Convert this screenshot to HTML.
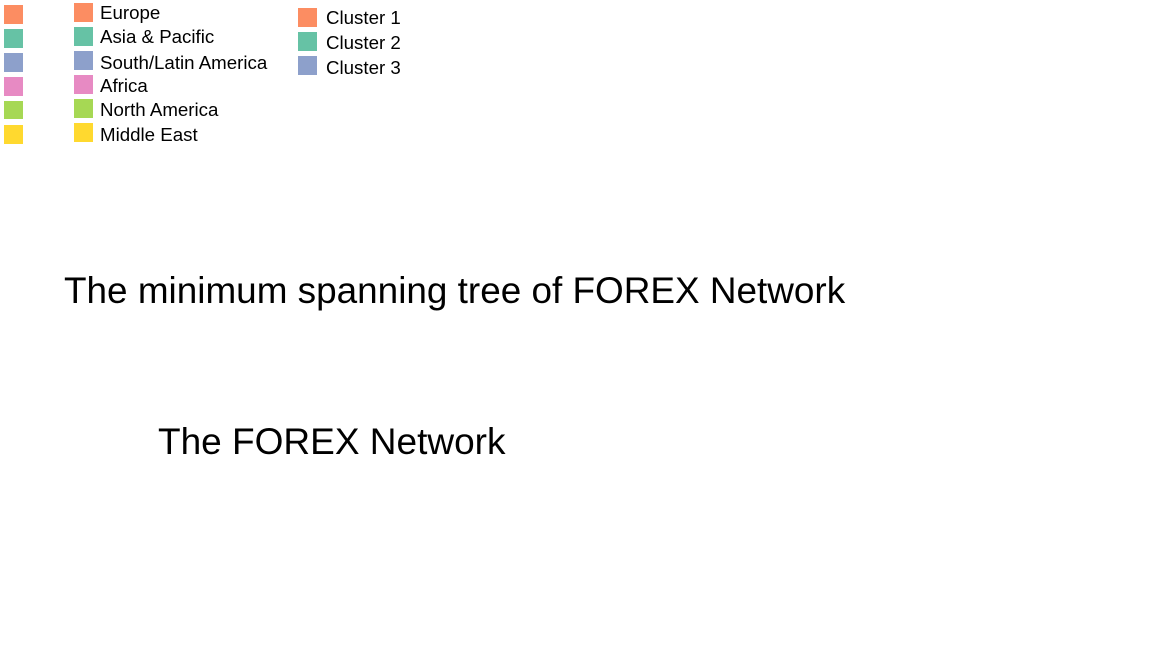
<!DOCTYPE html>
<html><head><meta charset="utf-8"><style>
html,body{margin:0;padding:0;background:#fff;width:1152px;height:648px;overflow:hidden}
svg{display:block}
text{font-family:"Liberation Sans",sans-serif;fill:#000}
</style></head><body>
<svg width="1152" height="648" xmlns="http://www.w3.org/2000/svg">
<g>
<rect x="4" y="5" width="19" height="19" fill="#fc8d62"/>
<rect x="4" y="29" width="19" height="19" fill="#66c2a5"/>
<rect x="4" y="53" width="19" height="19" fill="#8da0cb"/>
<rect x="4" y="77" width="19" height="19" fill="#e78ac3"/>
<rect x="4" y="101" width="19" height="18" fill="#a6d854"/>
<rect x="4" y="125" width="19" height="19" fill="#ffd92f"/>
</g>
<g>
<rect x="74" y="3" width="19" height="19" fill="#fc8d62"/>
<rect x="74" y="27" width="19" height="19" fill="#66c2a5"/>
<rect x="74" y="51" width="19" height="19" fill="#8da0cb"/>
<rect x="74" y="75" width="19" height="19" fill="#e78ac3"/>
<rect x="74" y="99" width="19" height="19" fill="#a6d854"/>
<rect x="74" y="123" width="19" height="19" fill="#ffd92f"/>
</g>
<g font-size="18.7">
<text x="100" y="19">Europe</text>
<text x="100" y="43">Asia &amp; Pacific</text>
<text x="100" y="69">South/Latin America</text>
<text x="100" y="92">Africa</text>
<text x="100" y="116">North America</text>
<text x="100" y="141">Middle East</text>
</g>
<rect x="298" y="8" width="19" height="19" fill="#fc8d62"/>
<rect x="298" y="32" width="19" height="19" fill="#66c2a5"/>
<rect x="298" y="56" width="19" height="19" fill="#8da0cb"/>
<g font-size="18.7">
<text x="326" y="24">Cluster 1</text>
<text x="326" y="49">Cluster 2</text>
<text x="326" y="74">Cluster 3</text>
</g>
<text x="64" y="303" font-size="36.9">The minimum spanning tree of FOREX Network</text>
<text x="158" y="454" font-size="37">The FOREX Network</text>
</svg>
</body></html>
